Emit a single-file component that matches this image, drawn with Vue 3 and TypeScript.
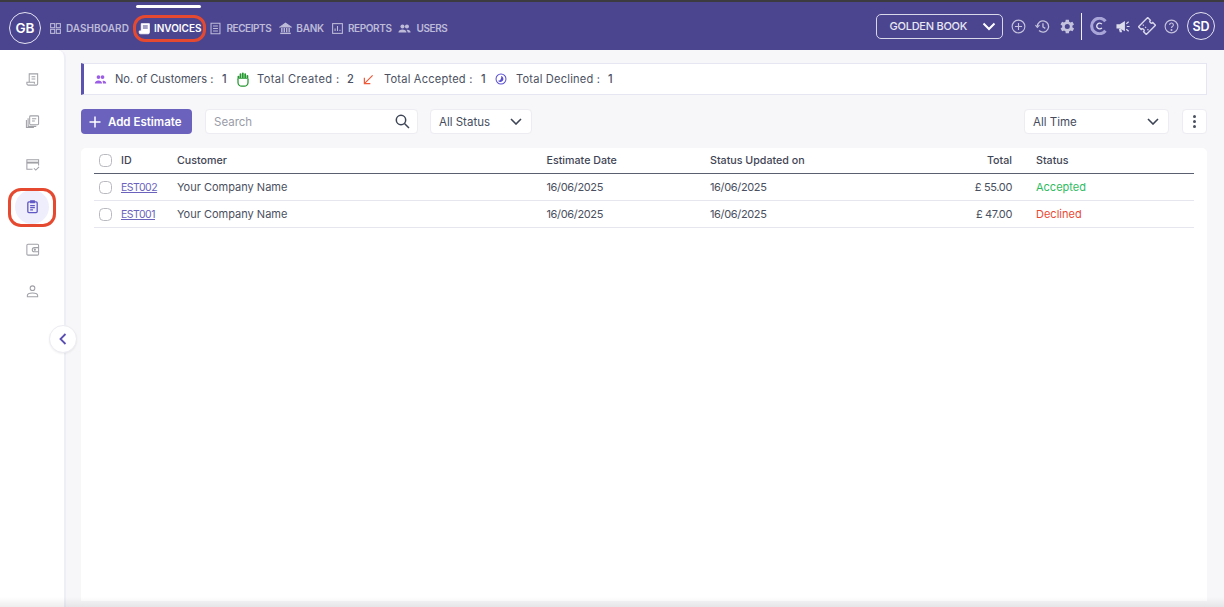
<script setup lang="ts">
interface Nav { label: string; icon: string; active?: boolean }
const navs: Nav[] = [
  { label: 'Dashboard', icon: 'grid' },
  { label: 'Invoices', icon: 'invoice', active: true },
  { label: 'Receipts', icon: 'receipt' },
  { label: 'Bank', icon: 'bank' },
  { label: 'Reports', icon: 'report' },
  { label: 'Users', icon: 'users' },
]
const rows = [
  { id: 'EST002', customer: 'Your Company Name', date: '16/06/2025', updated: '16/06/2025', total: '£ 55.00', status: 'Accepted' },
  { id: 'EST001', customer: 'Your Company Name', date: '16/06/2025', updated: '16/06/2025', total: '£ 47.00', status: 'Declined' },
]
const side = ['doc', 'copy', 'card', 'clip', 'wallet', 'user']
</script>

<template>
  <div class="page">
    <header class="top">
      <div class="avatar gb">GB</div>
      <nav class="nav">
        <a v-for="n in navs" :key="n.label" class="nav-item" :class="[n.icon, { active: n.active }]">
          <span v-if="n.active" class="top-mark"></span>
          <svg class="ni" viewBox="0 0 16 16" fill="none" stroke="currentColor" stroke-width="1.300">
            <template v-if="n.icon === 'grid'">
              <rect x="2" y="2" width="5" height="5" /><rect x="9" y="2" width="5" height="5" /><rect x="2" y="9" width="5" height="5" /><rect x="9" y="9" width="5" height="5" />
            </template>
            <template v-else-if="n.icon === 'invoice'">
              <path d="M4 11V2h10v11a1.500 1.500 0 0 1-1.500 1.500H3A1.500 1.500 0 0 1 1.500 13v-2H11v2" fill="currentColor" stroke-width="1" />
              <path d="M6 5h6M6 7.500h6" stroke="#4b4590" />
            </template>
            <template v-else-if="n.icon === 'receipt'">
              <path d="M2.500 1.500h11v13h-11z" /><path d="M5 5h6M5 8h6M5 11h6" />
            </template>
            <template v-else-if="n.icon === 'bank'">
              <path d="M1.500 6 8 1.500 14.500 6z" fill="currentColor" /><path d="M3.500 7.500v5M6.500 7.500v5M9.500 7.500v5M12.500 7.500v5" stroke-width="1.700" /><path d="M1.500 14h13" stroke-width="1.700" />
            </template>
            <template v-else-if="n.icon === 'report'">
              <rect x="2" y="2" width="12" height="12" /><path d="M5 11V8M8 11V5M11 11V9.500" />
            </template>
            <template v-else>
              <circle cx="5.500" cy="5.500" r="2.500" fill="currentColor" stroke="none" /><circle cx="11" cy="5.500" r="2.500" fill="currentColor" stroke="none" />
              <path d="M0.500 13c0-5 10-5 10 0zM12 13h3.500c0-2.800-2.500-3.800-5-3.300 1 .8 1.500 2 1.500 3.300z" fill="currentColor" stroke="none" />
            </template>
          </svg>
          <span>{{ n.label }}</span>
        </a>
      </nav>
      <div class="top-right">
        <div class="company">
          <span>GOLDEN BOOK</span>
          <svg width="14" height="9" viewBox="0 0 14 9" fill="none" stroke="#fff" stroke-width="2"><path d="M1.500 1.500 7 7l5.500-5.500" /></svg>
        </div>
        <svg class="ti first" viewBox="0 0 16 16" fill="none" stroke="currentColor" stroke-width="1.200"><circle cx="8" cy="8" r="6.800" /><path d="M8 4.200v7.600M4.200 8h7.600" /></svg>
        <svg class="ti" viewBox="0 0 16 16" fill="none" stroke="currentColor" stroke-width="1.400"><path d="M2.500 8a6 6 0 1 1 1.800 4.300" /><path d="M0.500 6.500 2.500 9l2.300-2.500" stroke-width="1.200" /><path d="M8.500 4.500V8.500l2.500 1.500" /></svg>
        <svg class="ti gear" viewBox="3 2.500 18 19" fill="currentColor"><path d="M19.400 13a7.500 7.500 0 0 0 0-2l2.100-1.600-2-3.500-2.500 1a7.500 7.500 0 0 0-1.700-1L15 3.300h-4l-.4 2.600a7.500 7.500 0 0 0-1.700 1l-2.500-1-2 3.500L6.600 11a7.500 7.500 0 0 0 0 2l-2.100 1.600 2 3.500 2.500-1a7.500 7.500 0 0 0 1.700 1l.3 2.600h4l.4-2.600a7.500 7.500 0 0 0 1.700-1l2.500 1 2-3.500zM13 15.200a3.200 3.200 0 1 1 0-6.400 3.200 3.200 0 0 1 0 6.400z" /></svg>
        <span class="divider"></span>
        <svg class="logo" viewBox="0 0 20 20" fill="none"><path d="M17.200 15.300A8.600 8.600 0 1 1 17.200 4.700" stroke="#a9a5d8" stroke-width="3.400" /><path d="M13.200 8a3.200 3.200 0 1 0 0 4" stroke="#e4e3f3" stroke-width="1.500" /></svg>
        <svg class="ti mega" viewBox="0 0 16 16" fill="#dcdbec"><path d="M0.500 5.500h3.500l5.500-3.500v11L4 10H0.500z" /><path d="M3 10.500h2.500l1 3.500H4z" /><path d="M11 5l2.500-2M11.500 8h3M11 11l2.500 2" stroke="#dcdbec" stroke-width="1.300" fill="none" /></svg>
        <svg class="ti tick" viewBox="0 0 18 18" fill="none" stroke="#d8d7ea" stroke-width="1.400"><g transform="rotate(-45 9 9)"><path d="M2.500 3.500h13v3.800a1.700 1.700 0 0 0 0 3.400v3.800h-13v-3.800a1.700 1.700 0 0 0 0-3.400z" /><path d="M7 5v1.400M7 8.300v1.400M7 11.600V13" stroke-width="1.100" /></g></svg>
        <svg class="ti help" viewBox="0 0 16 16" fill="none" stroke="currentColor" stroke-width="1.200"><circle cx="8" cy="8" r="6.800" /><path d="M6 6.300a2 2 0 1 1 3 1.700c-.7.400-1 .8-1 1.700" /><circle cx="8" cy="11.800" r=".5" fill="currentColor" /></svg>
        <div class="avatar sd">SD</div>
      </div>
    </header>

    <div class="body">
      <aside class="side">
        <div v-for="s in side" :key="s" class="si" :class="{ on: s === 'clip' }">
          <svg viewBox="0 0 16 16" fill="none" stroke="currentColor" stroke-width="1.100">
            <template v-if="s === 'doc'"><path d="M4.500 11V2h9v10.500A1.500 1.500 0 0 1 12 14H3.500A1.500 1.500 0 0 1 2 12.500V11h8v1.500" /><path d="M7 5h4M7 7.500h4" /></template>
            <template v-else-if="s === 'copy'"><rect x="5" y="2" width="9.500" height="9.500" rx="1" /><path d="M3.300 4.500v8.700h8.700M1.500 6.500v8h8" /><path d="M7.500 5h4.500M7.500 7.500h3" /></template>
            <template v-else-if="s === 'card'"><path d="M8 13H2V3h12.500v6" /><path d="M2 6h12.500" stroke-width="2" /><path d="m9.500 12 2 2 3.500-3.500" /></template>
            <template v-else-if="s === 'clip'"><rect x="3" y="3" width="10" height="11.500" rx="1.200" stroke-width="1.400" /><path d="M6 2h4v2H6z" fill="currentColor" /><path d="M5.500 7h5M5.500 9.300h5M5.500 11.600h3" stroke-width="1.300" /></template>
            <template v-else-if="s === 'wallet'"><rect x="2" y="2.500" width="12.500" height="11.500" rx="1.200" /><path d="M14.500 6H10a2 2 0 0 0 0 4.500h4.500" /><circle cx="10.500" cy="8.200" r=".6" fill="currentColor" /></template>
            <template v-else><circle cx="8" cy="4.500" r="2.500" /><path d="M2.500 13.500v-1.200C2.500 10.500 5 9.500 8 9.500s5.500 1 5.500 2.800v1.200z" /></template>
          </svg>
        </div>
        <button class="collapse" type="button" aria-label="Collapse">
          <svg width="8" height="12" viewBox="0 0 8 12" fill="none" stroke="#5a50b4" stroke-width="1.800"><path d="M6.500 1 1.500 6l5 5" /></svg>
        </button>
      </aside>

      <main class="main">
        <section class="summary">
          <svg class="s-i users" viewBox="0 0 16 16" fill="#9b5de5"><circle cx="5.500" cy="5" r="2.300" /><circle cx="10.500" cy="5" r="2.300" /><path d="M1 13c0-5 9-5 9 0zM11 13h4c0-2.800-2.200-3.800-4.500-3.300.5 1 .6 2 .5 3.300z" /></svg>
          <span class="lab l1">No. of Customers :</span><b class="val v1">1</b>
          <svg class="s-i hand" viewBox="0 0 14 18" fill="none" stroke="#23962f"><path d="M1.500 8.500V5.500M4 8.500V2.500M6.800 8.500V1.500M9.600 8.500V2.500M12.300 8.500V4.500" stroke-width="2.100" stroke-linecap="round" /><path d="M1 8h12" stroke-width="1.800" /><path d="M1 8v4.500A4.500 4.500 0 0 0 5.500 17h3a4.500 4.500 0 0 0 4.500-4.500V8" fill="#fff" stroke-width="1.500" /></svg>
          <span class="lab l2">Total Created :</span><b class="val v2">2</b>
          <svg class="s-i arrow" viewBox="0 0 12 12" fill="none" stroke="#ee5a3a" stroke-width="1.300"><path d="M10.500 1.500 1.500 10.500M1.500 4v6.500H8" /></svg>
          <span class="lab l3">Total Accepted :</span><b class="val v3">1</b>
          <svg class="s-i moon" viewBox="0 0 14 14"><circle cx="7" cy="7" r="5.800" fill="#fff" stroke="#5a50d0" stroke-width="1.200" /><path d="M7 3.500a3.500 3.500 0 1 1-3.500 5.500 4 4 0 0 0 3.500-5.500z" fill="#5a50d0" /></svg>
          <span class="lab l4">Total Declined :</span><b class="val v4">1</b>
        </section>

        <section class="toolbar">
          <button class="add" type="button">
            <svg width="12" height="12" viewBox="0 0 12 12" stroke="#fff" stroke-width="1.500"><path d="M6 0.500v11M0.500 6h11" /></svg>
            <span>Add Estimate</span>
          </button>
          <div class="ctl search">
            <span class="ph">Search</span>
            <svg width="15" height="15" viewBox="0 0 15 15" fill="none" stroke="#3d4456" stroke-width="1.500"><circle cx="6" cy="6" r="4.700" /><path d="m9.500 9.500 4.500 4.500" /></svg>
          </div>
          <div class="ctl status">
            <span>All Status</span>
            <svg width="12" height="7" viewBox="0 0 12 7" fill="none" stroke="#3d4456" stroke-width="1.600"><path d="m1 1 5 5 5-5" /></svg>
          </div>
          <div class="ctl time">
            <span>All Time</span>
            <svg width="12" height="7" viewBox="0 0 12 7" fill="none" stroke="#3d4456" stroke-width="1.600"><path d="m1 1 5 5 5-5" /></svg>
          </div>
          <div class="ctl more"><i></i><i></i><i></i></div>
        </section>

        <section class="card">
          <div class="row head">
            <span class="check"></span>
            <span>ID</span><span>Customer</span><span>Estimate Date</span><span>Status Updated on</span>
            <span class="right">Total</span><span class="st">Status</span>
          </div>
          <div v-for="r in rows" :key="r.id" class="row">
            <span class="check"></span>
            <a class="link">{{ r.id }}</a>
            <span>{{ r.customer }}</span><span class="num">{{ r.date }}</span><span class="num">{{ r.updated }}</span>
            <span class="right num">{{ r.total }}</span>
            <span class="st" :class="r.status === 'Accepted' ? 'ok' : 'bad'">{{ r.status }}</span>
          </div>
        </section>
      </main>
    </div>
    <div class="fade"></div>
  </div>
</template>

<style>
html, body { margin: 0; overflow: hidden; }
</style>

<style scoped>
* { box-sizing: border-box; }
.page { position: relative; width: 1224px; height: 607px; overflow: hidden; background: #f7f7f9; font-family: Inter, "Open Sans", sans-serif; color: #444a5c; display: flex; flex-direction: column; }
.top { height: 50px; flex: none; background: #4b4590; border-top: 2px solid #3b3b40; display: flex; align-items: center; padding: 0 9px; color: #c4c2dc; }
.avatar { border: 1.500px solid #e4e3f0; border-radius: 50%; color: #fff; font-weight: 600; display: flex; align-items: center; justify-content: center; flex: none; }
.gb { width: 32px; height: 32px; font-size: 13.500px; margin-top: 4px; }
.sd { width: 28px; height: 28px; font-size: 12.500px; margin-left: 8px; }
.nav { display: flex; align-items: center; margin-left: 8px; margin-top: 4px; }
.nav-item { position: relative; display: flex; align-items: center; gap: 4px; font-size: 10px; font-weight: 600; text-transform: uppercase; color: #bdbbd8; margin-right: 8px; height: 27px; white-space: nowrap; }
.nav-item.receipt { letter-spacing: -.45px; gap: 5px; }
.nav-item.bank { letter-spacing: -.2px; margin-right: 7px; }
.nav-item.report { letter-spacing: -.4px; margin-right: 6px; }
.nav-item.users { letter-spacing: -.4px; gap: 6px; }
.nav-item.grid { margin-right: 4px; }
.nav-item.active { color: #fff; outline: 3px solid #e5492f; outline-offset: -3px; border-radius: 12px; padding: 0 4px 0 5px; margin-right: 3px; gap: 3px; }
.top-mark { position: absolute; left: 3px; width: 65px; height: 3px; top: -10px; background: #fff; border-radius: 2px; }
.ni { width: 13px; height: 13px; flex: none; }
.top-right { margin-left: auto; display: flex; align-items: center; }
.company { width: 127px; height: 25px; border: 1px solid #d9d7ea; border-radius: 5px; display: flex; align-items: center; justify-content: space-between; padding: 0 6px 0 13px; color: #e8e7f3; font-size: 11px; font-weight: 500; letter-spacing: -.25px; }
.ti { width: 15px; height: 15px; margin-left: 9px; flex: none; }
.ti.first { margin-left: 8px; }
.ti.gear { margin-left: 9px; }
.divider { width: 1.500px; height: 27px; background: #f0eff8; margin: 0 8px 0 7px; flex: none; }
.logo { width: 18px; height: 18px; flex: none; }
.mega { margin-left: 8px; }
.tick { width: 18px; height: 18px; margin-left: 7px; }
.help { margin-left: 8px; }

.body { flex: 1; display: flex; min-height: 0; }
.side { position: relative; width: 66px; flex: none; background: #fff; border-right: 2px solid #eeeef7; padding-top: 12px; display: flex; flex-direction: column; align-items: center; border-top-right-radius: 8px; }
.si { width: 34px; height: 34px; margin-bottom: 8.500px; color: #a0a1a7; display: flex; align-items: center; justify-content: center; flex: none; }
.si svg { width: 15px; height: 15px; }
.si.on { position: relative; background: #efeefc; border-radius: 50%; color: #6058c4; }
.si.on::after { content: ""; position: absolute; left: -7px; right: -7px; top: -2px; bottom: -3px; border: 3px solid #e5492f; border-radius: 13px; }
.collapse { position: absolute; left: 49px; top: 275px; width: 28px; height: 28px; border-radius: 50%; background: #fff; border: 1px solid #ececf2; display: flex; align-items: center; justify-content: center; padding: 0; box-shadow: 0 1px 2px rgba(0,0,0,.06); }

.main { flex: 1; min-width: 0; padding: 13px 17px 0 15px; display: flex; flex-direction: column; }
.summary { height: 32px; flex: none; background: #fff; border: 1px solid #e6e6f2; border-left: 3px solid #5a54b0; display: flex; align-items: center; padding-left: 10px; font-size: 11.100px; color: #4b5162; }
.s-i { flex: none; }
.users { width: 13px; height: 13px; }
.lab { white-space: nowrap; }
.val { font-weight: 500; margin-left: 8px; width: 8px; }
.l1 { margin-left: 8px; width: 98px; }
.v1 { margin-left: 9px; }
.hand { width: 12px; height: 15px; margin-left: 7px; }
.l2 { width: 82px; margin-left: 8px; letter-spacing: .4px; }
.arrow { width: 11px; height: 11px; margin-left: 8px; }
.l3 { width: 89px; margin-left: 10px; letter-spacing: .2px; }
.moon { width: 12px; height: 12px; margin-left: 6px; }
.l4 { width: 84px; margin-left: 9px; letter-spacing: .2px; }

.toolbar { height: 25px; margin-top: 14px; display: flex; align-items: center; flex: none; }
.add { width: 111px; height: 25px; background: #6a62bd; border: 0; border-radius: 4px; color: #fff; font: 600 11.500px Inter, sans-serif; display: flex; align-items: center; padding: 0 0 0 8px; gap: 7px; }
.ctl { height: 25px; background: #fff; border: 1px solid #ececf2; border-radius: 4px; display: flex; align-items: center; justify-content: space-between; font-size: 11.500px; color: #464c5e; }
.search { width: 213px; margin-left: 13px; padding: 0 7px 0 8px; }
.ph { color: #9a9ca8; }
.status { width: 102px; margin-left: 12px; padding: 0 9px 0 8px; }
.time { width: 145px; margin-left: auto; padding: 0 9px 0 8px; }
.more { width: 25px; margin-left: 13px; flex-direction: column; justify-content: center; gap: 2px; }
.more i { width: 3px; height: 3px; border-radius: 50%; background: #4a5060; }

.card { margin-top: 14px; flex: 1; background: #fff; border-radius: 5px 5px 0 0; padding: 0 13px; font-size: 11px; color: #4a5060; margin-bottom: 6px; }
.row { display: grid; grid-template-columns: 22px 56px 369.500px 163.500px 240px 62px 1fr; align-items: center; height: 27px; border-bottom: 1px solid #e6e6ee; padding-left: 5px; }
.head { height: 26px; font-weight: 500; font-size: 10.700px; border-bottom: 1px solid #5a6070; color: #3f4555; }
.right { text-align: right; }
.st { padding-left: 24px; }
.num { letter-spacing: -.35px; }
.check { width: 13px; height: 13px; border: 1.500px solid #b9bac0; border-radius: 4.500px; }
.link { color: #6a62bd; text-decoration: underline; letter-spacing: -.5px; font-size: 10.500px; }
.ok { color: #2fbb62; }
.bad { color: #ea4a35; }
.fade { position: absolute; left: 0; right: 0; bottom: 0; height: 10px; pointer-events: none; background: linear-gradient(rgba(0,0,0,0), rgba(0,0,0,.07)); }
</style>
